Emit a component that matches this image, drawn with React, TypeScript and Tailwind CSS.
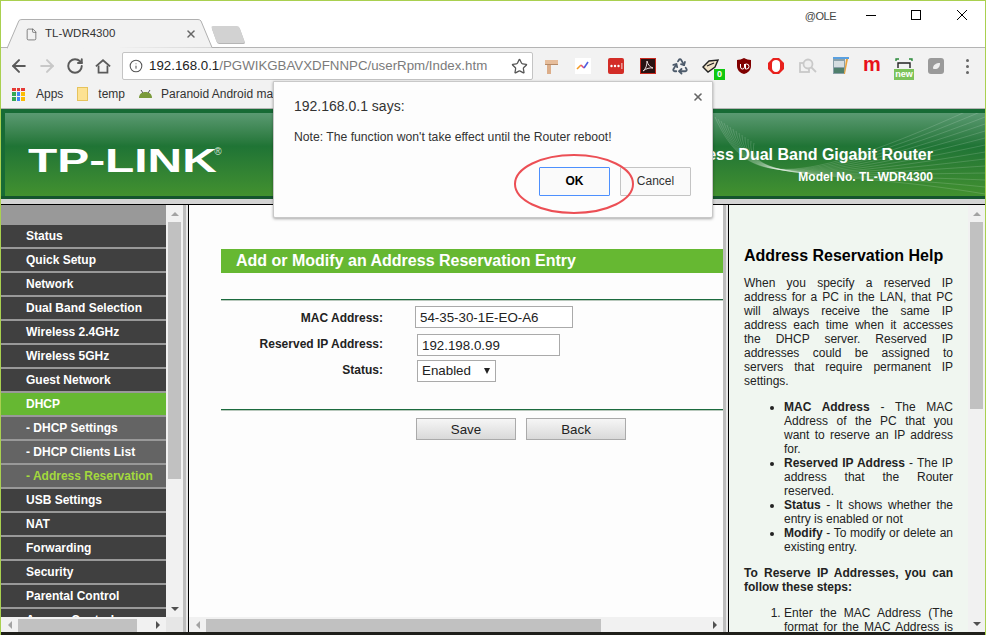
import { ArrowLeft, ArrowRight, RotateCw, Star, Info, File, X, Recycle } from "lucide-react";

const menu = [
  { label: "Status" },
  { label: "Quick Setup" },
  { label: "Network" },
  { label: "Dual Band Selection" },
  { label: "Wireless 2.4GHz" },
  { label: "Wireless 5GHz" },
  { label: "Guest Network" },
  { label: "DHCP", kind: "active" },
  { label: "- DHCP Settings", kind: "sub" },
  { label: "- DHCP Clients List", kind: "sub" },
  { label: "- Address Reservation", kind: "subActive" },
  { label: "USB Settings" },
  { label: "NAT" },
  { label: "Forwarding" },
  { label: "Security" },
  { label: "Parental Control" },
  { label: "Access Control" },
];

const arial = "font-['Liberation_Sans',Arial,sans-serif]";
const waves = [0, 1, 2, 3, 4, 5, 6, 7, 8, 9, 10, 11, 12, 13];

function ExtIcons() {
  return (
    <div className="flex items-center h-5 ml-[3px]">
      {/* signpost */}
      <svg width="32" height="20" viewBox="0 0 32 20" className="shrink-0">
        <rect x="11" y="4" width="4" height="14" fill="#dcae8a" />
        <rect x="9" y="4" width="13" height="5" fill="#e6bd9b" />
        <rect x="9" y="8" width="13" height="1" fill="#b58a68" />
      </svg>
      {/* trend */}
      <svg width="32" height="20" viewBox="0 0 32 20" className="shrink-0">
        <rect x="7" y="2" width="16" height="16" fill="#fff" />
        <path d="M9 13l4-4" stroke="#f59a23" strokeWidth="1.6" fill="none" />
        <path d="M13 9l3 3" stroke="#e2507c" strokeWidth="1.6" fill="none" />
        <path d="M16 12l4-6" stroke="#5060e0" strokeWidth="1.6" fill="none" />
      </svg>
      {/* lastpass */}
      <svg width="32" height="20" viewBox="0 0 32 20" className="shrink-0">
        <rect x="8" y="2" width="16" height="16" rx="2" fill="#d32d27" />
        <circle cx="11.5" cy="10" r="1.2" fill="#fff" />
        <circle cx="15" cy="10" r="1.2" fill="#fff" />
        <circle cx="18.5" cy="10" r="1.2" fill="#fff" />
        <rect x="21.5" y="7" width="0.8" height="6" fill="#fff" />
      </svg>
      {/* acrobat */}
      <svg width="32" height="20" viewBox="0 0 32 20" className="shrink-0">
        <rect x="8.500" y="2.500" width="15" height="15" fill="#2a1212" stroke="#c8281e" />
        <path d="M11 15c3-2 4-6 4-10 1 4 3 6 6 7-3-.5-7 .5-10 3z" fill="none" stroke="#e8d8d8" strokeWidth="1" />
      </svg>
      {/* recycle */}
      <div className="w-8 h-5 shrink-0 flex items-center justify-center">
        <Recycle size={18} strokeWidth={2.4} className="text-[#4d5b6b]" />
      </div>
      {/* badge */}
      <div className="relative w-8 h-5 shrink-0">
        <svg width="32" height="20" viewBox="0 0 32 20">
          <path d="M7 11l6-6 9-1-3 7-7 5z" fill="#f1e3c8" stroke="#222" strokeWidth="1.4" />
          <path d="M11 10l7-3" stroke="#222" strokeWidth="1.2" />
        </svg>
        <div className={`absolute left-[18px] top-[13px] w-[11px] h-[11px] bg-[#10c810] text-white text-[9px] leading-[11px] text-center font-bold ${arial}`}>0</div>
      </div>
      {/* ublock */}
      <svg width="32" height="20" viewBox="0 0 32 20" className="shrink-0">
        <path d="M16 2c2 1 5 2 7 2v6c0 4-3 7-7 8-4-1-7-4-7-8V4c2 0 5-1 7-2z" fill="#800000" />
        <path d="M12.500 8v3a2 2 0 004 0V8M17.500 8h1a2 2 0 010 5h-1z" stroke="#fff" strokeWidth="1" fill="none" />
      </svg>
      {/* stop hand */}
      <svg width="32" height="20" viewBox="0 0 32 20" className="shrink-0">
        <path d="M13 2h6l5 5v6l-5 5h-6l-5-5V7z" fill="#e8211d" />
        <path d="M12 8c0-3 1.500-4 4-4s4 1 4 4v4c0 2-1.500 4-4 4s-4-2-4-4z" fill="#fff" />
      </svg>
      {/* magnifier */}
      <svg width="32" height="20" viewBox="0 0 32 20" className="shrink-0" fill="none" stroke="#c9c9c9" strokeWidth="1.8">
        <rect x="8" y="7" width="9" height="9" />
        <circle cx="16" cy="8" r="4.500" fill="#efefef" />
        <path d="M19 11l5 5" />
      </svg>
      {/* notes */}
      <svg width="32" height="20" viewBox="0 0 32 20" className="shrink-0">
        <rect x="9" y="2" width="12" height="16" fill="#8aa0a8" />
        <rect x="10" y="5" width="10" height="6" fill="#d5dde0" />
        <rect x="10" y="12" width="10" height="5" fill="#4f7f6c" />
        <path d="M22 3h2l-3 15h-1z" fill="#e9a23b" />
        <rect x="9" y="1" width="16" height="2" fill="#5aa0e0" />
      </svg>
      {/* m */}
      <div className={`w-8 h-5 shrink-0 text-center text-[#e8101a] font-bold text-[20px] leading-[17px] ${arial}`}>m</div>
      {/* new */}
      <div className="relative w-8 h-5 shrink-0">
        <svg width="32" height="20" viewBox="0 0 32 20">
          <path d="M8 5V3h3M24 5V3h-3" stroke="#2a8a3a" strokeWidth="1.4" fill="none" />
          <path d="M10 12V7h12v5" stroke="#222" strokeWidth="1.4" fill="none" />
        </svg>
        <div className={`absolute left-[6px] top-[13px] w-[20px] h-[11px] bg-[#7cc35a] text-white text-[9px] leading-[10px] text-center font-bold ${arial}`}>new</div>
      </div>
      {/* grey square */}
      <svg width="32" height="20" viewBox="0 0 32 20" className="shrink-0">
        <rect x="8" y="2" width="16" height="16" rx="3" fill="#9a9a9a" />
        <path d="M13 12c0-3 3-5 7-5 0 4-2 6-5 6-1 0-2 0-2-1z" fill="#eee" />
      </svg>
    </div>
  );
}

function ScrollArrow({ dir }: { dir: "up" | "down" | "left" | "right" }) {
  const cls =
    dir === "up"
      ? "border-x-[4px] border-x-transparent border-b-[4px] border-b-[#a3a3a3]"
      : dir === "down"
        ? "border-x-[4px] border-x-transparent border-t-[4px] border-t-[#505050]"
        : dir === "left"
          ? "border-y-[4px] border-y-transparent border-r-[4px] border-r-[#a3a3a3]"
          : "border-y-[4px] border-y-transparent border-l-[4px] border-l-[#505050]";
  return <div className={`w-0 h-0 ${cls}`} />;
}

function VScroll({ thumb }: { thumb: string }) {
  return (
    <div className="w-[17px] shrink-0 bg-[#f1f1f1] flex flex-col items-center">
      <div className="h-[17px] shrink-0 flex items-center justify-center">
        <ScrollArrow dir="up" />
      </div>
      <div className="flex-1 w-full px-[2px]">
        <div className={`bg-[#c1c1c1] ${thumb}`} />
      </div>
      <div className="h-[17px] shrink-0 flex items-center justify-center">
        <ScrollArrow dir="down" />
      </div>
    </div>
  );
}

function HScroll({ thumb }: { thumb: string }) {
  return (
    <div className="flex-1 min-w-0 h-[15px] bg-[#f1f1f1] flex items-center">
      <div className="w-[17px] h-full shrink-0 flex items-center justify-center">
        <ScrollArrow dir="left" />
      </div>
      <div className="flex-1 h-full pt-[2px]">
        <div className={`h-full bg-[#c1c1c1] ${thumb}`} />
      </div>
      <div className="w-[17px] h-full shrink-0 flex items-center justify-center">
        <ScrollArrow dir="right" />
      </div>
    </div>
  );
}

function Splitter() {
  return (
    <>
      <div className="w-[5px] shrink-0 bg-[#e8e8e8] border-l-[3px] border-[#bdbdbd]" />
      <div className="w-px shrink-0 bg-black" />
    </>
  );
}

export default function App() {
  return (
    <div className={`h-[635px] w-[986px] overflow-hidden relative flex flex-col bg-white border-x border-t border-[#a9d04f] ${arial}`}>
      {/* tab strip */}
      <div className="h-[47px] shrink-0 relative bg-white flex items-end">
        <div className="absolute left-0 right-0 bottom-0 h-px bg-[#b4b4b4]" />
        <div className="relative h-[30px] w-[212px] ml-[6px] -mb-px z-10">
          <svg width="212" height="30" viewBox="0 0 212 30" className="absolute inset-0">
            <path d="M0 29.500 L12 1.500 Q13 .5 15 .5 H191 Q193 .5 194 2 L205 28.500 H212" fill="#f2f2f2" stroke="#b0b0b0" />
          </svg>
          <div className="absolute left-0 top-0 w-[205px] h-full flex items-center pl-[18px] pr-[15px]">
            <File size={13} strokeWidth={1.3} className="text-[#555] shrink-0" />
            <span className="ml-[7px] text-[11.5px] text-[#333] flex-1">TL-WDR4300</span>
            <X size={12} strokeWidth={3} className="text-[#666]" />
          </div>
        </div>
        <div className="mb-[5px] -ml-[5px] relative z-10 w-[28px] h-[17px] bg-[#d2d2d2] rounded-[2px] skew-x-[20deg] shadow-[0_1px_0_#b5b5b5]" />
        <div className="absolute right-[18px] top-0 h-full flex items-start">
          <span className="text-[11px] tracking-[-0.5px] text-[#444] mt-[7px] mr-[30px]">@OLE</span>
          <div className="w-[10px] h-px bg-black mt-[14px] mr-[35px]" />
          <div className="w-[10px] h-[10px] border border-black mt-[9px] mr-[36px]" />
          <svg width="10" height="10" viewBox="0 0 10 10" className="mt-[9px]">
            <path d="M0 0l10 10M10 0L0 10" stroke="#000" strokeWidth="1" />
          </svg>
        </div>
      </div>
      {/* toolbar */}
      <div className="h-[36px] shrink-0 bg-[#f2f2f2] flex items-center">
        <div className="w-[28px] ml-[4px] flex justify-center">
          <ArrowLeft size={20} strokeWidth={2.4} className="text-[#5a5a5a]" />
        </div>
        <div className="w-[28px] flex justify-center">
          <ArrowRight size={20} strokeWidth={2.4} className="text-[#c8c8c8]" />
        </div>
        <div className="w-[28px] flex justify-center">
          <RotateCw size={18} strokeWidth={2.6} className="text-[#5a5a5a]" />
        </div>
        <div className="w-[28px] flex justify-center">
          <svg width="16" height="16" viewBox="0 0 18 17" fill="none" stroke="#5a5a5a" strokeWidth="2">
            <path d="M1 9L9 2l8 7" />
            <path d="M4 8v8h10V8" />
          </svg>
        </div>
        <div className="ml-[5px] h-[28px] w-[411px] bg-white border border-[#c4c4c4] rounded-[2px] flex items-center shrink-0">
          <Info size={14} strokeWidth={1.8} className="text-[#555] ml-[6px]" />
          <span className="ml-[6px] text-[13.3px] text-[#222] whitespace-nowrap">
            192.168.0.1<span className="text-[#7b7b7b]">/PGWIKGBAVXDFNNPC/userRpm/Index.htm</span>
          </span>
          <Star size={17} strokeWidth={1.8} className="text-[#555] ml-auto mr-[4px]" />
        </div>
        <ExtIcons />
        <div className="ml-auto mr-[16px] flex flex-col gap-[3px]">
          <div className="w-[3px] h-[3px] rounded-full bg-[#666]" />
          <div className="w-[3px] h-[3px] rounded-full bg-[#666]" />
          <div className="w-[3px] h-[3px] rounded-full bg-[#666]" />
        </div>
      </div>
      {/* bookmarks */}
      <div className="h-[25px] shrink-0 bg-[#f2f2f2] border-b border-[#b5b5b5] flex items-center text-[12px] text-[#333] pl-[11px] pb-[4px]">
        <div className="grid grid-cols-3 gap-px w-[13px] h-[13px]">
          <div className="bg-[#e53935]" />
          <div className="bg-[#e53935]" />
          <div className="bg-[#e53935]" />
          <div className="bg-[#34a853]" />
          <div className="bg-[#4285f4]" />
          <div className="bg-[#fbbc05]" />
          <div className="bg-[#34a853]" />
          <div className="bg-[#4285f4]" />
          <div className="bg-[#fbbc05]" />
        </div>
        <span className="ml-[11px]">Apps</span>
        <div className="ml-[14px] w-[11px] h-[14px] bg-[#fde293] border border-[#e6c35c]" />
        <span className="ml-[10px]">temp</span>
        <svg width="15" height="10" viewBox="0 0 15 10" className="ml-[13px]">
          <path d="M1 9c0-4 3-6 6.500-6S14 5 14 9z" fill="#7a9a3a" />
          <path d="M3 1l2 3M12 1l-2 3" stroke="#555" />
        </svg>
        <span className="ml-[8px] whitespace-nowrap">Paranoid Android ma</span>
      </div>
      {/* router page header */}
      <div className="h-[90px] shrink-0 relative bg-[#176b35] pt-[4px] pl-[4px] border-b-[3px] border-[#14552e]">
        <div className="h-full bg-gradient-to-b from-[#5a9a72] via-[#1f7435] via-40% to-[#42912f] pl-[23px] pt-[35px]">
          <div className="flex items-start">
            <span className="inline-block text-white text-[33px] leading-[26px] font-bold scale-x-[1.45] origin-left">TP-LINK</span>
            <span className="text-[#d8e8d8] text-[10px] leading-[10px] ml-[56px] -mt-[1px]">®</span>
          </div>
        </div>
        <svg width="290" height="83" viewBox="0 0 290 83" className="absolute right-0 top-[4px]" fill="none" stroke="#fff" strokeOpacity="0.22" strokeWidth="0.7">
          {waves.map((i) => (
            <path key={i} d={`M${20 + i * 3} ${4 + i * 2} C 50 70 ${90 + i * 4} ${82 - i * 2} 290 ${i * 7 - 10}`} />
          ))}
        </svg>
        <div className="absolute right-[52px] top-[36px] text-right text-white font-bold">
          <div className="text-[16px] leading-[20px]">Wireless Dual Band Gigabit Router</div>
          <div className="text-[12px] leading-[18px] mt-[3px]">Model No. TL-WDR4300</div>
        </div>
      </div>
      <div className="h-[6px] shrink-0 bg-[#d4d4d4] border-b border-black" />
      {/* frames */}
      <div className="flex-1 min-h-0 flex bg-[#1f1f1a] pb-[3px]">
        {/* menu frame */}
        <div className="w-[182px] shrink-0 flex flex-col">
          <div className="flex-1 min-h-0 flex">
            <div className="w-[165px] shrink-0 bg-[#999] overflow-hidden pt-[20px]">
              {menu.map((m) => (
                <div
                  key={m.label}
                  className={`h-[22px] mb-[2px] leading-[22px] pl-[25px] text-[12px] font-bold whitespace-nowrap ${
                    m.kind === "active"
                      ? "bg-[#66b832] text-white"
                      : m.kind === "sub"
                        ? "bg-[#646464] text-white"
                        : m.kind === "subActive"
                          ? "bg-[#646464] text-[#a3d93c]"
                          : "bg-[#404040] text-white"
                  }`}
                >
                  {m.label}
                </div>
              ))}
            </div>
            <VScroll thumb="h-[257px]" />
          </div>
          <div className="flex">
            <HScroll thumb="w-[119px]" />
            <div className="w-[17px] h-[15px] shrink-0 bg-[#e6e6e6]" />
          </div>
        </div>
        <Splitter />
        {/* main frame */}
        <div className="w-[534px] shrink-0 flex flex-col bg-[#fdfdfd]">
          <div className="flex-1 min-h-0 pl-[32px] pt-[44px] overflow-hidden">
            <div className="h-[24px] bg-[#66b832] text-white text-[16px] leading-[23px] font-bold pl-[15px]">
              Add or Modify an Address Reservation Entry
            </div>
            <div className="h-[2px] mt-[26px] bg-[#1c6b3e] border-b border-[#b8c8bc]" />
            <div className="h-[108px] pt-[5px]">
              <div className="flex items-center h-[22px]">
                <span className="w-[162px] text-right text-[12px] font-bold text-[#222] mt-[2px]">MAC Address:</span>
                <div className="ml-[32px] w-[158px] h-[22px] bg-white border border-[#aaa] text-[13.33px] leading-[22px] pl-[4px] text-[#222]">54-35-30-1E-EO-A6</div>
              </div>
              <div className="flex items-center h-[22px] mt-[6px]">
                <span className="w-[162px] text-right text-[12px] font-bold text-[#222] -mt-[2px]">Reserved IP Address:</span>
                <div className="ml-[34px] w-[143px] h-[22px] bg-white border border-[#aaa] text-[13.33px] leading-[22px] pl-[4px] text-[#222]">192.198.0.99</div>
              </div>
              <div className="flex items-center h-[22px] mt-[4px]">
                <span className="w-[162px] text-right text-[12px] font-bold text-[#222] -mt-[2px]">Status:</span>
                <div className="ml-[34px] w-[79px] h-[22px] bg-white border border-[#aaa] text-[13.33px] leading-[22px] pl-[4px] text-[#222] flex items-center justify-between pr-[5px]">
                  Enabled
                  <span className="w-0 h-0 border-x-[3.500px] border-x-transparent border-t-[6px] border-t-[#222]" />
                </div>
              </div>
            </div>
            <div className="h-[2px] bg-[#1c6b3e] border-b border-[#b8c8bc]" />
            <div className="flex mt-[7px] ml-[195px] gap-[10px]">
              {["Save", "Back"].map((b) => (
                <div key={b} className="w-[100px] h-[22px] border border-[#aaa] bg-gradient-to-b from-[#f6f6f6] to-[#d9d9d9] text-center text-[13.33px] leading-[22px] text-[#222]">
                  {b}
                </div>
              ))}
            </div>
          </div>
          <div className="flex">
            <HScroll thumb="w-[395px]" />
          </div>
        </div>
        <Splitter />
        {/* help frame */}
        <div className="flex-1 min-w-0 flex bg-[#f0f6f0]">
          <div className="flex-1 min-w-0 pl-[15px] pr-[15px] pt-[42px] overflow-hidden text-[12px] leading-[14px] text-[#222]">
            <div className="text-[16px] leading-[18px] font-bold text-black mb-[11px]">Address Reservation Help</div>
            <p className="text-justify">
              When you specify a reserved IP address for a PC in the LAN, that PC will always receive the same IP address each time when it accesses the DHCP server. Reserved IP addresses could be assigned to servers that require permanent IP settings.
            </p>
            <ul className="list-disc pl-[40px] mt-[12px]">
              <li className="text-justify"><b>MAC Address</b> - The MAC Address of the PC that you want to reserve an IP address for.</li>
              <li className="text-justify"><b>Reserved IP Address</b> - The IP address that the Router reserved.</li>
              <li className="text-justify"><b>Status</b> - It shows whether the entry is enabled or not</li>
              <li className="text-justify"><b>Modify</b> - To modify or delete an existing entry.</li>
            </ul>
            <p className="font-bold text-justify mt-[12px]">To Reserve IP Addresses, you can follow these steps:</p>
            <ol className="list-decimal pl-[40px] mt-[12px]">
              <li className="text-justify">Enter the MAC Address (The format for the MAC Address is XX-XX-XX-XX-XX-XX.)</li>
            </ol>
          </div>
          <VScroll thumb="h-[187px]" />
        </div>
      </div>
      {/* alert dialog */}
      <div className="absolute left-[272px] top-[80px] w-[440px] h-[137px] bg-[#fdfdfd] rounded-b-[2px] border border-[#c8c8c8] shadow-[0_1px_3px_rgba(0,0,0,0.35)]">
        <X size={12} strokeWidth={3.2} className="absolute right-[8px] top-[9px] text-[#666]" />
        <div className="absolute left-[20px] top-[14px] text-[14px] text-[#333]">192.168.0.1 says:</div>
        <div className="absolute left-[20px] top-[46px] text-[12.2px] text-[#333]">Note: The function won't take effect until the Router reboot!</div>
        <div className="absolute left-[265px] top-[85px] w-[71px] h-[29px] border border-[#4d90fe] rounded-[1px] bg-[#fafafa] text-center text-[12px] leading-[27px] font-bold text-black">OK</div>
        <div className="absolute left-[346px] top-[85px] w-[71px] h-[29px] border border-[#c4c4c4] rounded-[1px] bg-[#fafafa] text-center text-[12px] leading-[27px] text-[#333]">Cancel</div>
      </div>
      {/* red annotation */}
      <svg width="130" height="66" viewBox="0 0 130 66" className="absolute left-[511px] top-[152px] pointer-events-none">
        <ellipse cx="62" cy="31" rx="59" ry="29" fill="none" stroke="#ec4f55" strokeWidth="2" />
      </svg>
    </div>
  );
}
